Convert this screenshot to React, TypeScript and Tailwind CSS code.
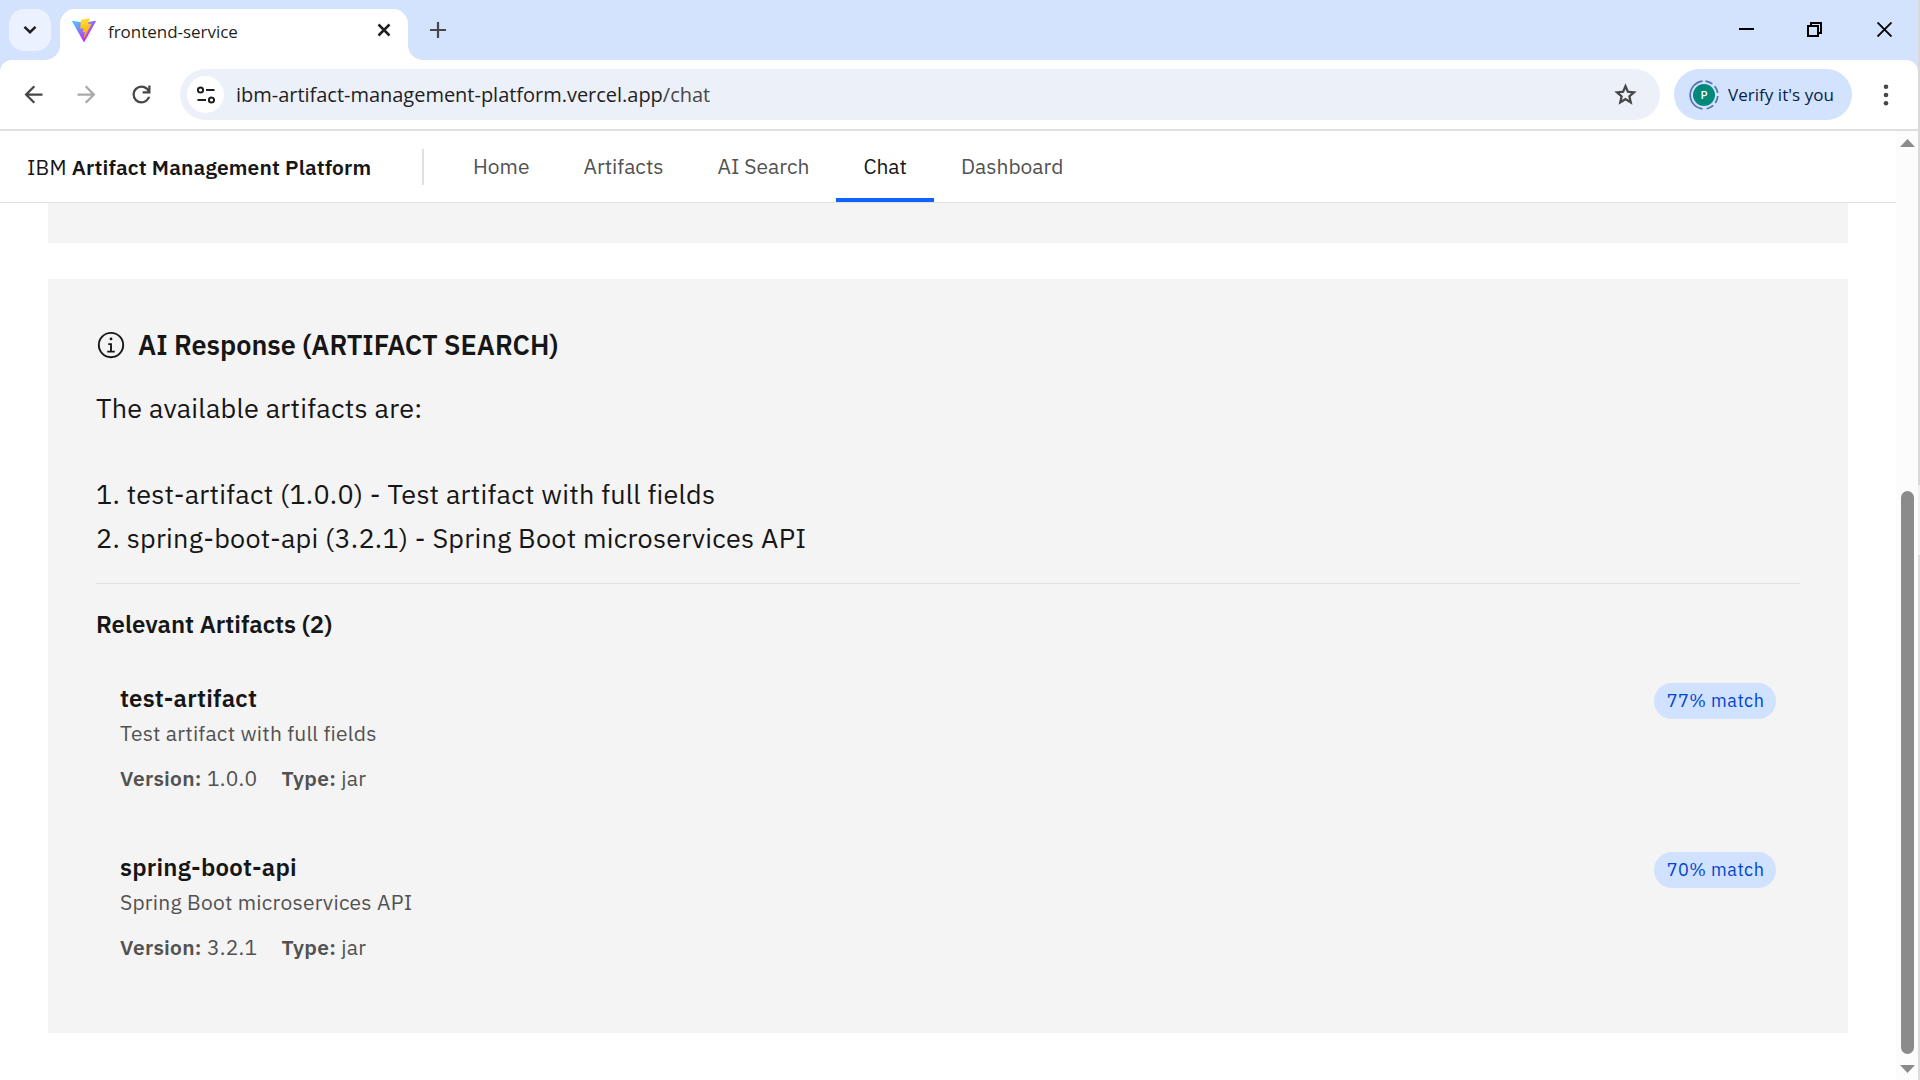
import type { ReactNode } from 'react';

type Artifact = {
  name: string;
  description: string;
  version: string;
  type: string;
  match: string;
};

const navItems = [
  { label: 'Home', active: false },
  { label: 'Artifacts', active: false },
  { label: 'AI Search', active: false },
  { label: 'Chat', active: true },
  { label: 'Dashboard', active: false },
];

const responseLines = [
  'The available artifacts are:',
  '',
  '1. test-artifact (1.0.0) - Test artifact with full fields',
  '2. spring-boot-api (3.2.1) - Spring Boot microservices API',
];

const artifacts: Artifact[] = [
  {
    name: 'test-artifact',
    description: 'Test artifact with full fields',
    version: '1.0.0',
    type: 'jar',
    match: '77% match',
  },
  {
    name: 'spring-boot-api',
    description: 'Spring Boot microservices API',
    version: '3.2.1',
    type: 'jar',
    match: '70% match',
  },
];

function MaterialIcon({ d, className }: { d: string; className: string }) {
  return (
    <svg viewBox="0 0 24 24" className={`size-[27px] shrink-0 ${className}`} fill="currentColor">
      <path d={d} />
    </svg>
  );
}

const ARROW_BACK = 'M7.825 13 13.425 18.6 12 20 4 12 12 4 13.425 5.4 7.825 11H20v2z';
const REFRESH =
  'M12 20q-3.35 0-5.675-2.325Q4 15.35 4 12t2.325-5.675Q8.65 4 12 4q1.725 0 3.3.713 1.575.712 2.7 2.037V4h2v7h-7V9h4.2q-.8-1.4-2.187-2.2Q13.625 6 12 6 9.5 6 7.75 7.75T6 12q0 2.5 1.75 4.25T12 18q1.925 0 3.475-1.1T17.65 14h2.1q-.7 2.65-2.85 4.325Q14.75 20 12 20z';
const STAR =
  'M8.85 16.825 12 14.925l3.15 1.925-.825-3.6 2.775-2.4-3.65-.325-1.45-3.4-1.45 3.375-3.65.325 2.775 2.425zM5.825 21l1.625-7.025L2 9.25l7.2-.625L12 2l2.8 6.625 7.2.625-5.45 4.725L18.175 21 12 17.275z';

function ViteLogo() {
  return (
    <svg viewBox="0 0 256 257" className="mt-[9px] h-6 w-6 shrink-0">
      <defs>
        <linearGradient id="viteBody" x1="-.828%" x2="57.636%" y1="7.652%" y2="78.411%">
          <stop offset="0%" stopColor="#41D1FF" />
          <stop offset="100%" stopColor="#BD34FE" />
        </linearGradient>
        <linearGradient id="viteBolt" x1="43.376%" x2="50.316%" y1="2.242%" y2="89.03%">
          <stop offset="0%" stopColor="#FFEA83" />
          <stop offset="8.333%" stopColor="#FFDD35" />
          <stop offset="100%" stopColor="#FFA800" />
        </linearGradient>
      </defs>
      <path
        fill="url(#viteBody)"
        d="M255.153 37.938L134.897 252.976c-2.483 4.44-8.862 4.466-11.382.048L.875 37.958c-2.746-4.814 1.371-10.646 6.827-9.67l120.385 21.517a6.537 6.537 0 0 0 2.322-.004l117.867-21.483c5.438-.991 9.574 4.796 6.877 9.62Z"
      />
      <path
        fill="url(#viteBolt)"
        d="M185.432.063L96.44 17.501a3.268 3.268 0 0 0-2.634 3.014l-5.474 92.456a3.268 3.268 0 0 0 3.997 3.378l24.777-5.718c2.318-.535 4.413 1.507 3.936 3.838l-7.361 36.047c-.495 2.426 1.782 4.5 4.151 3.78l15.304-4.649c2.372-.72 4.652 1.36 4.15 3.788l-11.698 56.621c-.732 3.542 3.979 5.473 5.943 2.437l1.313-2.028l72.516-144.72c1.215-2.423-.88-5.186-3.54-4.672l-25.505 4.922c-2.396.462-4.435-1.77-3.759-4.114l16.646-57.705c.677-2.35-1.37-4.583-3.769-4.113Z"
      />
    </svg>
  );
}

function TabStrip() {
  return (
    <div className="flex h-[60px] shrink-0 items-start bg-[#d3e2fd] pt-[9px]">
      <button className="ml-[9px] flex size-[42px] items-center justify-center rounded-[15px] bg-[#ebf1fe]">
        <svg viewBox="0 0 14 10" className="h-[10px] w-[14px]" fill="none" stroke="#1f1f1f" strokeWidth="2.5">
          <path d="M1.5 1.8 7 7.2l5.500-5.400" />
        </svg>
      </button>
      <div className="relative ml-[9px] flex h-[51px] w-[348px] rounded-t-[15px] bg-white pl-3">
        <svg viewBox="0 0 15 15" className="absolute -left-[15px] bottom-0 size-[15px]">
          <path d="M15 0v15H0A15 15 0 0 0 15 0Z" fill="#fff" />
        </svg>
        <svg viewBox="0 0 15 15" className="absolute -right-[15px] bottom-0 size-[15px]">
          <path d="M0 0v15h15A15 15 0 0 1 0 0Z" fill="#fff" />
        </svg>
        <ViteLogo />
        <span className="ml-3 mt-[11px] h-6 text-[17px] leading-6 tracking-[-0.03px] text-[#1f1f1f]">
          frontend-service
        </span>
        <svg viewBox="0 0 14 14" className="ml-auto mr-[17px] mt-[14px] size-[14px]" stroke="#1f1f1f" strokeWidth="2.500">
          <path d="m1.500 1.500 11 11m0-11-11 11" />
        </svg>
      </div>
      <svg viewBox="0 0 16 16" className="ml-[22px] mt-[13px] size-4" stroke="#474747" strokeWidth="2.200">
        <path d="M8 0v16M0 8h16" />
      </svg>
      <div className="ml-auto mt-[13px] flex">
        <svg viewBox="0 0 15 15" className="size-[15px]" fill="none" stroke="#000" strokeWidth="2">
          <path d="M0 7h15" />
        </svg>
        <svg viewBox="0 0 15 15" className="ml-[53px] size-[15px]" fill="none" stroke="#000" strokeWidth="2">
          <path d="M1 4h10v10H1zM4 4V1h10v10h-3" />
        </svg>
        <svg viewBox="0 0 15 15" className="ml-[55px] mr-[26px] size-[15px]" fill="none" stroke="#000" strokeWidth="1.900">
          <path d="m.5.5 14 14m0-14-14 14" />
        </svg>
      </div>
    </div>
  );
}

function Toolbar() {
  return (
    <div className="shrink-0 bg-[#d3e2fd]">
      <div className="flex h-[71px] items-center rounded-t-[12px] border-b-2 border-[#dfdfdf] bg-white">
        <MaterialIcon d={ARROW_BACK} className="ml-5 text-[#474747]" />
        <MaterialIcon d={ARROW_BACK} className="ml-[26px] -scale-x-100 text-[#a9a9a9]" />
        <MaterialIcon d={REFRESH} className="ml-7 text-[#474747]" />
        <div className="ml-[25px] flex h-[51px] w-[1480px] items-center rounded-full bg-[#ecf0f9] pl-[7px] pr-[21px]">
          <span className="flex size-[37px] items-center justify-center rounded-full bg-white">
            <svg viewBox="0 0 18 18" className="size-[18px]" fill="none" stroke="#1f1f1f" strokeWidth="2">
              <circle cx="3.500" cy="4" r="2.600" />
              <path d="M9 4h8.500M.5 14H9" />
              <circle cx="14.500" cy="14" r="2.600" />
            </svg>
          </span>
          <span className="ml-3 mt-px text-[20px] leading-7 tracking-[-0.02px] text-[#1f1f1f]">
            ibm-artifact-management-platform.vercel.app<span className="text-[#474747]">/chat</span>
          </span>
          <MaterialIcon d={STAR} className="ml-auto text-[#474747]" />
        </div>
        <button className="ml-[14px] flex h-[51px] w-[178px] items-center rounded-full bg-[#d3e2fd] pl-[15px]">
          <svg viewBox="0 0 30 30" className="size-[30px]" fill="none">
            <path d="M13.500 1.100A14 14 0 0 0 13.500 28.900" stroke="#5274ad" strokeWidth="1.700" />
            <path
              d="M16.500 1.100A14 14 0 0 1 16.500 28.900"
              stroke="#5274ad"
              strokeWidth="1.700"
              strokeDasharray="7.500 3.100"
            />
            <circle cx="15" cy="15" r="11" fill="#00897b" />
            <text x="15" y="18.500" textAnchor="middle" fontSize="10.500" fontWeight="500" fill="#fff" className="font-['Roboto',sans-serif]">
              P
            </text>
          </svg>
          <span className="mt-px ml-[9px] text-[17px] leading-6 tracking-[0.04px] text-[#041e49]">Verify it's you</span>
        </button>
        <svg viewBox="0 0 6 22" className="ml-[31px] h-[22px] w-[6px]" fill="#474747">
          <circle cx="3" cy="2.700" r="2.300" />
          <circle cx="3" cy="11" r="2.300" />
          <circle cx="3" cy="19.300" r="2.300" />
        </svg>
      </div>
    </div>
  );
}

function AppHeader() {
  return (
    <header className="flex h-[72px] shrink-0 items-center border-b border-[#e0e0e0] bg-white pl-[27px] text-[21px] leading-[27px]">
      <div className="w-[395px] shrink-0 whitespace-pre pt-[2px] tracking-[0.15px] text-[#161616]">
        IBM <span className="font-semibold">Artifact Management Platform</span>
      </div>
      <div className="h-9 w-[2px] bg-[#e0e0e0]" />
      <nav className="ml-[22px] flex h-full">
        {navItems.map((item) => (
          <a
            key={item.label}
            className={
              item.active
                ? 'flex items-center border-b-4 border-[#0f62fe] px-[27px] pt-1 text-[#161616]'
                : 'flex items-center px-[27px] text-[#525252]'
            }
          >
            {item.label}
          </a>
        ))}
      </nav>
    </header>
  );
}

function Field({ label, children }: { label: string; children: ReactNode }) {
  return (
    <span>
      <strong className="font-semibold">{label}:</strong> {children}
    </span>
  );
}

function ArtifactRow({ artifact }: { artifact: Artifact }) {
  return (
    <li className="flex h-[169px] items-start justify-between p-6">
      <div>
        <h4 className="pt-px text-[24px] font-semibold leading-[29px] tracking-[0.24px] text-[#161616]">{artifact.name}</h4>
        <p className="mt-[5px] text-[21px] leading-[30px] tracking-[0.24px] text-[#525252]">{artifact.description}</p>
        <div className="mt-3 flex gap-6 text-[21px] leading-9 tracking-[0.24px] text-[#525252]">
          <Field label="Version">{artifact.version}</Field>
          <Field label="Type">{artifact.type}</Field>
        </div>
      </div>
      <span className="flex h-9 w-[122px] items-center justify-center rounded-full bg-[#d0e2ff] pl-px text-[18px] leading-6 tracking-[0.48px] text-[#0043ce]">
        {artifact.match}
      </span>
    </li>
  );
}

function ResponseCard() {
  return (
    <section className="mt-9 h-[754px] bg-[#f4f4f4] px-12 pt-12">
      <div className="flex h-9 items-center gap-3">
        <svg viewBox="0 0 32 32" className="size-[30px] shrink-0" fill="#161616">
          <path d="M17 22V14H13v2h2v6H12v2h8V22zM16 8a1.500 1.500 0 1 0 1.500 1.500A1.500 1.500 0 0 0 16 8Z" />
          <path d="M16 30A14 14 0 1 1 30 16 14 14 0 0 1 16 30ZM16 4A12 12 0 1 0 28 16 12 12 0 0 0 16 4Z" />
        </svg>
        <h3 className="-mt-px text-[27px] font-semibold leading-9 text-[#161616]">AI Response (ARTIFACT SEARCH)</h3>
      </div>
      <div className="mt-[23px] border-b border-[#e0e0e0] pb-6 text-[27px] leading-[43.200px] tracking-[0.240px] text-[#161616]">
        {responseLines.map((line, i) => (
          <p key={i} className="h-[43.200px]">
            {line}
          </p>
        ))}
      </div>
      <h4 className="mt-[22px] text-[24px] font-semibold leading-9 text-[#161616]">
        Relevant Artifacts (2)
      </h4>
      <ul className="mt-[17px]">
        {artifacts.map((artifact) => (
          <ArtifactRow key={artifact.name} artifact={artifact} />
        ))}
      </ul>
    </section>
  );
}

function Scrollbar() {
  return (
    <div className="flex w-[22px] shrink-0 flex-col items-center bg-[#fcfcfc] pl-px">
      <svg viewBox="0 0 15 8" className="mt-2 h-2 w-[15px]" fill="#8b8b8b">
        <path d="M7.500 0 15 8H0z" />
      </svg>
      <div className="mt-[344px] h-[563px] w-[13px] rounded-full bg-[#8b8b8b]" />
      <svg viewBox="0 0 15 8" className="mt-[11px] h-2 w-[15px]" fill="#8b8b8b">
        <path d="M0 0h15L7.500 8z" />
      </svg>
    </div>
  );
}

export default function App() {
  return (
    <div className="flex h-[1080px] w-[1920px] overflow-hidden bg-white">
      <div className="flex w-[1918px] flex-col">
        <div className="contents font-['Open_Sans','Noto_Sans',sans-serif]">
          <TabStrip />
          <Toolbar />
        </div>
        <div className="flex min-h-0 flex-1 font-['IBM_Plex_Sans','Open_Sans',sans-serif]">
          <div className="flex flex-1 flex-col overflow-hidden">
            <AppHeader />
            <main className="px-12">
              <div className="h-10 bg-[#f4f4f4]" />
              <ResponseCard />
            </main>
          </div>
          <Scrollbar />
        </div>
      </div>
      <div className="flex w-[2px] flex-col">
        <div className="h-[485px] bg-[#d9d9d9]" />
        <div className="h-[70px] bg-[#f0f0f0]" />
        <div className="flex-1 bg-[#dcdcdc]" />
      </div>
    </div>
  );
}
